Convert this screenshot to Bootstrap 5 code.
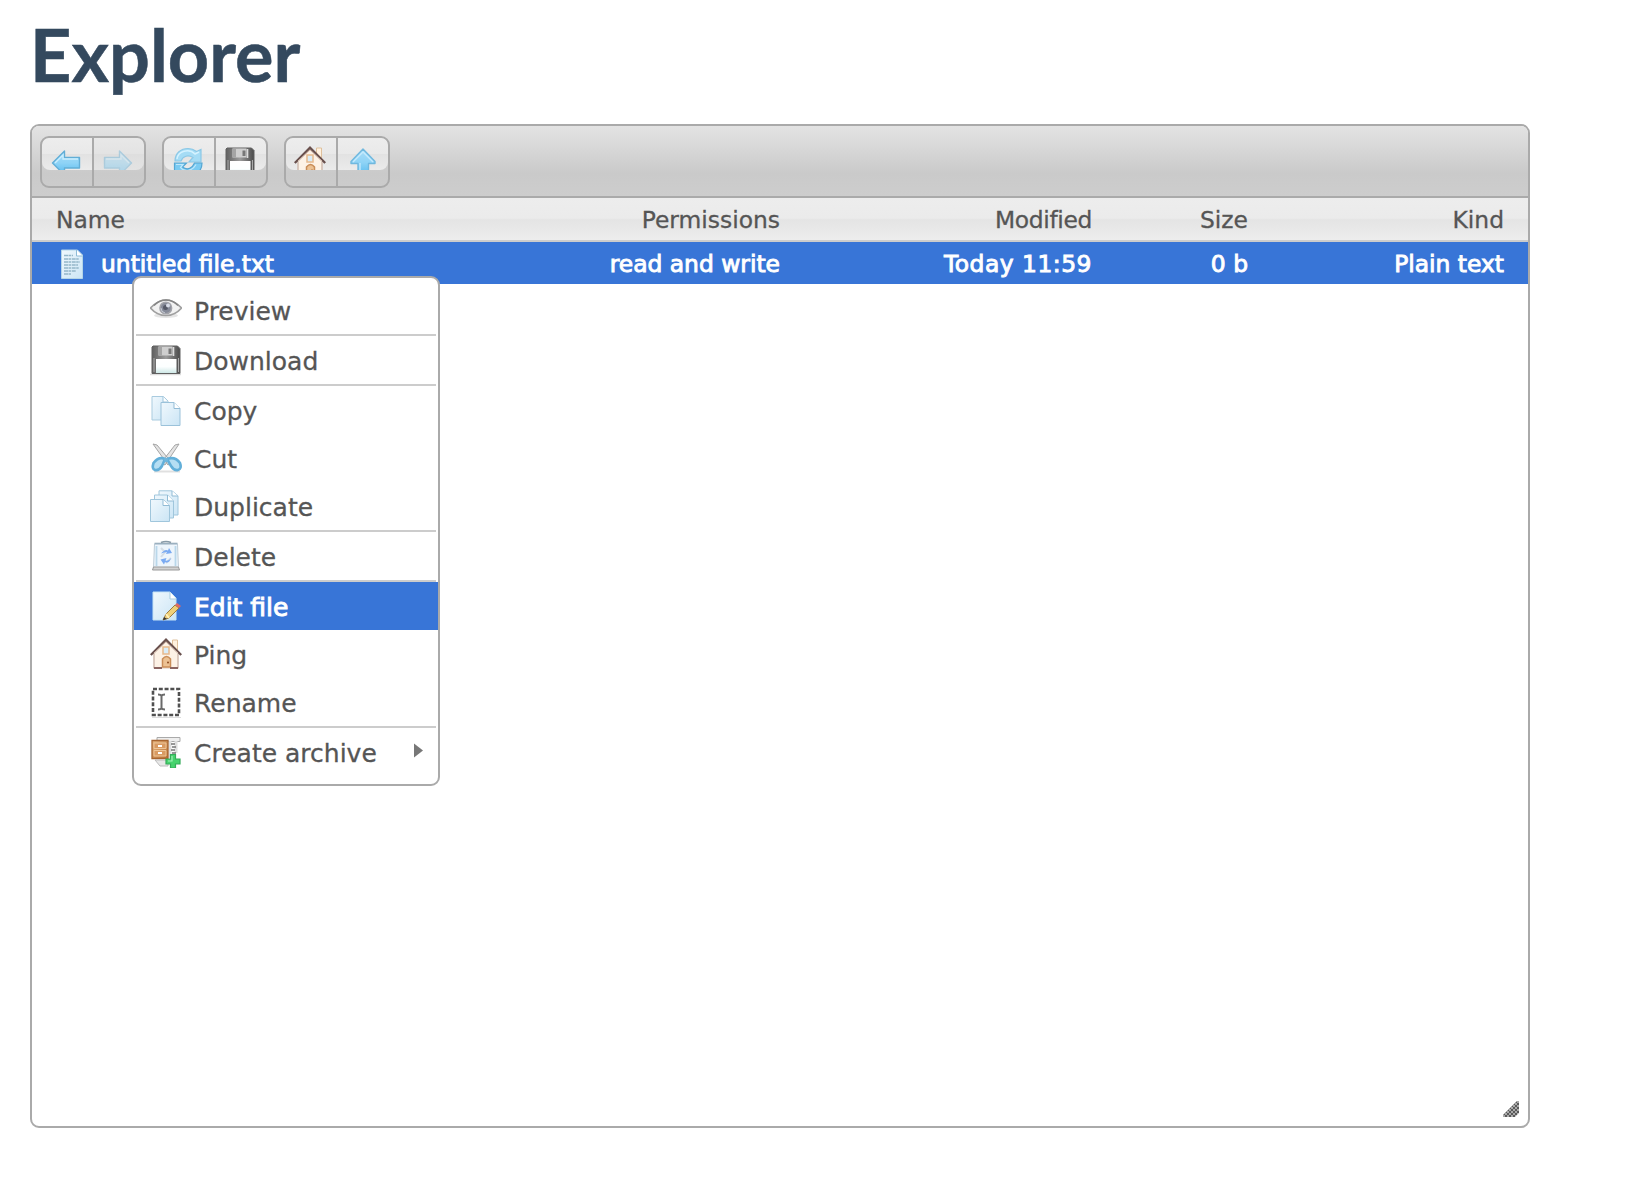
<!DOCTYPE html>
<html lang="en">
<head>
<meta charset="utf-8">
<meta name="viewport" content="width=device-width, initial-scale=1">
<title>Explorer</title>
<link href="https://cdn.jsdelivr.net/npm/bootstrap@5.3.0/dist/css/bootstrap.min.css" rel="stylesheet">
<style>
body{font-family:"DejaVu Sans",Verdana,sans-serif;color:#555;padding:11px 0 0 30px;overflow:hidden}
.page-title{font-family:Lato,sans-serif;font-weight:700;font-size:72px;line-height:86px;color:#34495e;-webkit-text-stroke:.5px #34495e;margin-bottom:27px}
.explorer{width:1500px;height:1004px;border:2px solid #aaa;border-radius:9px;overflow:hidden}
.toolbar{height:72px;padding:10px 8px;gap:16px;border-bottom:2px solid #aaa;background:linear-gradient(#e3e3e3,#cacaca 68%,#cdcdcd)}
.tool-group{height:52px;border:2px solid #aaa;border-radius:9px;overflow:hidden}
.tool{width:50px;height:48px;padding:0 0 16px;border:0;background:none}
.tool+.tool{width:52px;border-left:2px solid #aaa}
.tool-face{display:block;height:32px;padding:8px 0 0 8px;overflow:hidden;background:linear-gradient(#ededed,#e9e9e9 49%,#e2e2e2 51%,#ebebeb);border-radius:7px 0 0 8px}
.tool+.tool .tool-face{border-radius:0 7px 8px 0}
.tool:disabled .tool-face{background:linear-gradient(#e8e8e8,#e3e3e3 49%,#dedede 51%,#e3e3e3)}
.tool:disabled svg{opacity:.42}
.ico{width:32px;height:32px;display:block;flex:none}
.files{table-layout:fixed;width:100%;font-size:23.4px;line-height:40px;border-collapse:separate;border-spacing:0}
.files th,.files td{padding:2px 24px 0 0;text-align:right;font-weight:400;white-space:nowrap;height:42px}
.files th:first-child,.files td:first-child{padding-left:24px;text-align:left}
.files th{background:linear-gradient(#ededed,#ebebeb 48%,#e4e4e4 52%,#ededed);border-bottom:2px solid #ccc;height:44px;-webkit-text-stroke:.3px #555}
.files td{background:#3875d7;color:#fff;-webkit-text-stroke:.9px #fff}
.files .head-date{letter-spacing:-.35px}
.files .cell-date{letter-spacing:.5px}
.file-name{margin-left:13px}
.ctx{left:132px;top:276px;width:308px;border:2px solid #aaa;border-radius:9px;background:#fff;padding:8px 0;font-size:25px;-webkit-text-stroke:.3px #555}
.ctx-item{height:48px;padding:0 15px 0 16px;gap:12px;white-space:nowrap}
.ctx-label{padding-top:3px}
.ctx-item.on{background:#3875d7;color:#fff;-webkit-text-stroke:.9px #fff}
.ctx-sep{height:2px;margin:0 2px;background:#ccc}
.grip{width:16px;height:16px;right:9px;bottom:9px}
</style>
</head>
<body>
<svg width="0" height="0" class="position-absolute">
<defs>
<linearGradient id="gb" x2="0" y2="1"><stop stop-color="#a9ddf8"/><stop offset=".5" stop-color="#8ed3f6"/><stop offset="1" stop-color="#55b9ee"/></linearGradient>
<linearGradient id="gp" x2="1" y2="1"><stop stop-color="#f0f8fd"/><stop offset="1" stop-color="#cbe5f5"/></linearGradient>
<linearGradient id="gm" x2="1" y2="0"><stop stop-color="#606060"/><stop offset=".5" stop-color="#9c9c9c"/><stop offset="1" stop-color="#4a4a4a"/></linearGradient>
<linearGradient id="gl" x2="0" y2="1"><stop stop-color="#fff"/><stop offset=".55" stop-color="#fcffff"/><stop offset="1" stop-color="#cfe9e7"/></linearGradient>
<linearGradient id="gw" x2="1" y2="1"><stop stop-color="#e8b780"/><stop offset="1" stop-color="#b86f33"/></linearGradient>
<symbol id="left" viewBox="0 0 32 32"><path d="M2.500 17 14.500 5v6.500H29.500v10.500H14.500v7z" fill="url(#gb)" stroke="#62aed6" stroke-width="1.400" stroke-linejoin="round"/><path d="m5 17 8-8v4h15" fill="none" stroke="#cbeefe" stroke-width="1.300"/></symbol>
<symbol id="up" viewBox="0 0 32 32"><path d="M17 3 29 15.500v2h-6.500V30h-10.500V17.500H5v-2z" fill="url(#gb)" stroke="#70b8de" stroke-width="1.400" stroke-linejoin="round"/><path d="m7 16 10-10 10 10M14 17v12" fill="none" stroke="#c5eafd" stroke-width="1.300"/></symbol>
<symbol id="reload" viewBox="0 0 32 32"><path d="M3 15C3 7 9 2.500 16 2.500c4 0 6 1 8.500 3L29 3.500v12.500H17l4-4.500c-5-3-10-1.500-12 3.500z" fill="#a5dcf5" stroke="#8cc8e6" stroke-width="1.200"/><path d="M5 13c1-8 12-11 18-5l4-2" fill="none" stroke="#d4f2ff" stroke-width="1.500"/><path d="M30 17c0 8-6 13-13 13-4 0-6-1-9-3l-5.500 3V17h12l-4 4c5 4 10 1 12-4z" fill="#7bcbf2" stroke="#56a7d3" stroke-width="1.200"/><path d="M4 18.500h7l-2.500 3c4 5 12 3.500 15.500-3" fill="none" stroke="#bfe8fc" stroke-width="1.200"/></symbol>
<symbol id="disk" viewBox="0 0 32 32"><path d="M0 30.500h31" stroke="#ddd" stroke-width="1.500"/><path d="M3 2h24.500L30 4.500V29.500H2V3z" fill="url(#gm)" stroke="#606060" stroke-width="1"/><path d="M8.500 2.500h14v9h-14z" fill="#cfcfcf"/><path d="M8.500 2.500H12v9H8.500z" fill="#a4a4a4"/><path d="M18.500 4.500H21.500v5.500h-3z" fill="#777"/><path d="M23.500 3v9" stroke="#ddd" stroke-width="1.600"/><path d="M6 15h20.500v14H6z" fill="url(#gl)"/><path d="M4 14v14M28.500 14v14" stroke="#aaa" stroke-width="1"/></symbol>
<symbol id="home" viewBox="0 0 32 32"><path d="M22.500 2h5v12h-5z" fill="#fff1df" stroke="#dfc09c"/><path d="M4 15 16 3l12 12v15H4z" fill="#fdf2e6" stroke="#dcc9bb" stroke-width="1.200"/><path d="M4 16v14M28 16v14" stroke="#cdb8ae" stroke-width="1"/><path d="M.8 17 16 1.700 31.200 17" fill="none" stroke="#69504d" stroke-width="2.300"/><path d="M4 15 16 4l12 11" fill="none" stroke="#d8c0b2" stroke-width="1"/><rect x="13" y="9" width="6" height="7" fill="#d9ecf7" stroke="#e6b98c" stroke-width="1.500"/><path d="M12.500 29v-8q4-5 8 0v8z" fill="#ecc294" stroke="#c98d58" stroke-width="1.500"/><circle cx="18" cy="24.500" r="1" fill="#8c4b20"/><path d="M4 30h8M20 30h8" stroke="#8b6561" stroke-width="2"/></symbol>
<symbol id="eye" viewBox="0 0 32 32"><ellipse cx="16" cy="21.500" rx="12" ry="2.500" fill="#e5e5e5"/><path d="M.5 14Q8 6 16 6t15.500 8Q25 21.500 16 21.500T.500 14z" fill="#f2f2f2" stroke="#a0a0a0" stroke-width="1.700"/><path d="M4 11.500Q9 6 16 6t12 5.500" fill="none" stroke="#858585" stroke-width="1.500"/><circle cx="15.800" cy="14" r="6.600" fill="#a3a4aa"/><circle cx="15.800" cy="14" r="5" fill="#868a98"/><circle cx="15.500" cy="13.500" r="2.500" fill="#555967"/><circle cx="18" cy="11.500" r="2" fill="#d8dce7"/><path d="M11 14q0 4 4 5" stroke="#c3c8d3" fill="none"/></symbol>
<symbol id="copy" viewBox="0 0 32 32"><path d="M2 2.500h11.500L18 7v19H2z" fill="url(#gp)" stroke="#a9cbdf"/><path d="M13 2.500V8h5" fill="#fff" stroke="#9fc5dc"/><path d="M11 8.500h13l6 6v17H11z" fill="url(#gp)" stroke="#9bc2da"/><path d="M24 8.500v6h6" fill="#fff" stroke="#92bbd5"/></symbol>
<symbol id="cut" viewBox="0 0 32 32"><path d="M4 29.500h26" stroke="#e0e0e0" stroke-width="2"/><path d="M3 2l4 1 15 18-4 2zM29 2l-4 1-14 18 4 2z" fill="#e4e4e4" stroke="#a5a5a5"/><g fill="#b5def3" stroke="#62afd9" stroke-width="2.600"><path d="M17 17q8-3 13 4 2 6-2 7-4 1-7-4z"/><path d="M15 17Q9 14 3.500 21q-2 6 1.500 7 4 1 7-4z"/></g><circle cx="16" cy="18" r="2.200" fill="#70b6dc"/></symbol>
<symbol id="dup" viewBox="0 0 32 32"><g fill="url(#gp)" stroke="#a0c6dc"><path d="M9 .800h13l6 5V25H9z"/><path d="M4.500 5h13l6 6v17h-19z"/><path d="M.5 9.500h13l6 6v16H.5z"/></g><path d="M22 1v5h6M17.500 5v6h6M13 9.500v6h6.500" fill="#fff" stroke="#91bbd5"/></symbol>
<symbol id="bin" viewBox="0 0 32 32"><path d="M3.500 28.500 4.500 4h23l1 24.500z" fill="#edf5fc" stroke="#bdccd7"/><path d="M4.500 3.500h23" stroke="#9bb0bf" stroke-width="1.600"/><path d="M6.500 6v20M25.500 6v20" stroke="#b9d7ea" stroke-width="1.800"/><path d="M11 2.500q5-2 10 0" fill="none" stroke="#899ba8" stroke-width="1.500"/><path d="m11 8 4 4-4 5M21 18l-5 5" fill="none" stroke="#d5dde5" stroke-width="2"/><path d="M11 13.500q4-5 7-3l1-2.500 3 5-6 1 1-2q-3 0-6 1.500zM21 18q-2 6-6 4l-1 2.500-3.500-5 6-1.500-1 2.500q3 1 5.500-2.500z" fill="#7aaaf2"/><path d="M3.500 27h25l1 3H2.500z" fill="#d2d2d2" stroke="#999"/></symbol>
<symbol id="edit" viewBox="0 0 32 32"><path d="M3 2h17l6 6v22H3z" fill="url(#gp)" stroke="#c5e4f5"/><path d="M20 2v7h6" fill="#fff" stroke="#a7cce1"/><path d="m13 30 3-6 9-9 4 3-10 10z" fill="#efd078" stroke="#9b7b43" stroke-width="1"/><path d="m25 15 2-2 4 3-2 2z" fill="#dd6867"/><path d="m13 30 1-3 3 2z" fill="#333"/><path d="m16 24 3 4" stroke="#fff0b8" stroke-width="2"/></symbol>
<symbol id="rename" viewBox="0 0 32 32"><path d="M2 31.500h29" stroke="#ddd"/><rect x="3" y="3" width="26" height="26" fill="none" stroke="#505050" stroke-width="2.600" stroke-dasharray="4 1.780"/><path d="M8 8.500q3 0 3.500 1.500.5-1.500 3.500-1.500M11.500 9.500v13M8 23.500q3 0 3.500-1.500.5 1.500 3.500 1.500" fill="none" stroke="#6a6a6a" stroke-width="2"/></symbol>
<symbol id="archive" viewBox="0 0 32 32"><path d="M7 1.500h23v4H7z" fill="#eee" stroke="#aaa"/><path d="M20 5v17M26 5v12" stroke="#ddd" stroke-width="3"/><path d="M21 8h4M22 11h4M21 14h4M22 17h4" stroke="#777" stroke-width="1.300"/><path d="M2 4.500h16v18H2z" fill="url(#gw)" stroke="#a76530" stroke-width="1.300"/><path d="M4 7h12v5.500H4zM4 14.500h12V20H4z" fill="#d99b62" stroke="#edc497"/><path d="M8 10h4M8 17h4" stroke="#fff" stroke-width="1.800"/><path d="M5 24h13v6h-8z" fill="#e7e7e7" stroke="#bbb"/><path d="M20.500 18.500h5V23H30v5h-4.500v4h-5v-4H16v-5h4.500z" fill="#46d36d" stroke="#35ab59" stroke-width="1.200"/><path d="M22 20v5h-4" fill="none" stroke="#a2f1b7" stroke-width="1.200"/></symbol>
<symbol id="text" viewBox="0 0 32 32"><path d="M5.500 2h16L26.500 7v23.500h-21z" fill="url(#gp)" stroke="#b4d5e7"/><path d="M20.500 2v6h6" fill="#fff" stroke="#8ebbd7"/><path d="M8 7.500h9M8 11h15M8 14h16M8 17h14M8 20h15M8 23h12M8 26h7" stroke="#94b7c9" stroke-width="1.600" stroke-dasharray="4 .500 2.500 .700"/></symbol>
</defs>
</svg>

<h1 class="page-title">Explorer</h1>

<main class="explorer position-relative">
  <div class="toolbar d-flex">
    <div class="tool-group d-flex">
      <button class="tool" aria-label="Back"><span class="tool-face"><svg class="ico"><use href="#left"/></svg></span></button>
      <button class="tool" aria-label="Forward" disabled><span class="tool-face"><svg class="ico" viewBox="0 0 32 32"><g transform="translate(32) scale(-1 1)"><use href="#left" width="32" height="32"/></g></svg></span></button>
    </div>
    <div class="tool-group d-flex">
      <button class="tool" aria-label="Reload"><span class="tool-face"><svg class="ico"><use href="#reload"/></svg></span></button>
      <button class="tool" aria-label="Download"><span class="tool-face"><svg class="ico"><use href="#disk"/></svg></span></button>
    </div>
    <div class="tool-group d-flex">
      <button class="tool" aria-label="Home"><span class="tool-face"><svg class="ico"><use href="#home"/></svg></span></button>
      <button class="tool" aria-label="Up"><span class="tool-face"><svg class="ico"><use href="#up"/></svg></span></button>
    </div>
  </div>
  <table class="files">
    <colgroup><col style="width:460px"><col style="width:312px"><col style="width:312px"><col style="width:156px"><col></colgroup>
    <thead><tr><th>Name</th><th>Permissions</th><th class="head-date">Modified</th><th>Size</th><th>Kind</th></tr></thead>
    <tbody><tr>
      <td><div class="d-flex align-items-center"><svg class="ico"><use href="#text"/></svg><span class="file-name">untitled file.txt</span></div></td>
      <td>read and write</td><td class="cell-date">Today 11:59</td><td>0 b</td><td>Plain text</td>
    </tr></tbody>
  </table>
  <svg class="grip position-absolute" viewBox="0 0 16 16"><defs><pattern id="chk" width="4" height="4" patternUnits="userSpaceOnUse"><path d="M0 0h4v4H0z" fill="#aaa"/><path d="M0 0h2v2H0zM2 2h2v2H2z" fill="#5a5a5a"/></pattern></defs><path d="M0 16v-2L14 0h2v12l-4 4z" fill="url(#chk)"/></svg>
</main>

<nav class="ctx position-absolute">
  <div class="ctx-item d-flex align-items-center"><svg class="ico"><use href="#eye"/></svg><span class="ctx-label">Preview</span></div>
  <div class="ctx-sep"></div>
  <div class="ctx-item d-flex align-items-center"><svg class="ico"><use href="#disk"/></svg><span class="ctx-label">Download</span></div>
  <div class="ctx-sep"></div>
  <div class="ctx-item d-flex align-items-center"><svg class="ico"><use href="#copy"/></svg><span class="ctx-label">Copy</span></div>
  <div class="ctx-item d-flex align-items-center"><svg class="ico"><use href="#cut"/></svg><span class="ctx-label">Cut</span></div>
  <div class="ctx-item d-flex align-items-center"><svg class="ico"><use href="#dup"/></svg><span class="ctx-label">Duplicate</span></div>
  <div class="ctx-sep"></div>
  <div class="ctx-item d-flex align-items-center"><svg class="ico"><use href="#bin"/></svg><span class="ctx-label">Delete</span></div>
  <div class="ctx-sep"></div>
  <div class="ctx-item on d-flex align-items-center"><svg class="ico"><use href="#edit"/></svg><span class="ctx-label">Edit file</span></div>
  <div class="ctx-item d-flex align-items-center"><svg class="ico"><use href="#home"/></svg><span class="ctx-label">Ping</span></div>
  <div class="ctx-item d-flex align-items-center"><svg class="ico"><use href="#rename"/></svg><span class="ctx-label">Rename</span></div>
  <div class="ctx-sep"></div>
  <div class="ctx-item d-flex align-items-center"><svg class="ico"><use href="#archive"/></svg><span class="ctx-label">Create archive</span><svg class="ms-auto mb-1" width="9" height="15"><path d="M0 .500l9 7-9 7z" fill="#777"/></svg></div>
</nav>
<script src="https://cdn.jsdelivr.net/npm/bootstrap@5.3.0/dist/js/bootstrap.bundle.min.js"></script>
</body>
</html>
